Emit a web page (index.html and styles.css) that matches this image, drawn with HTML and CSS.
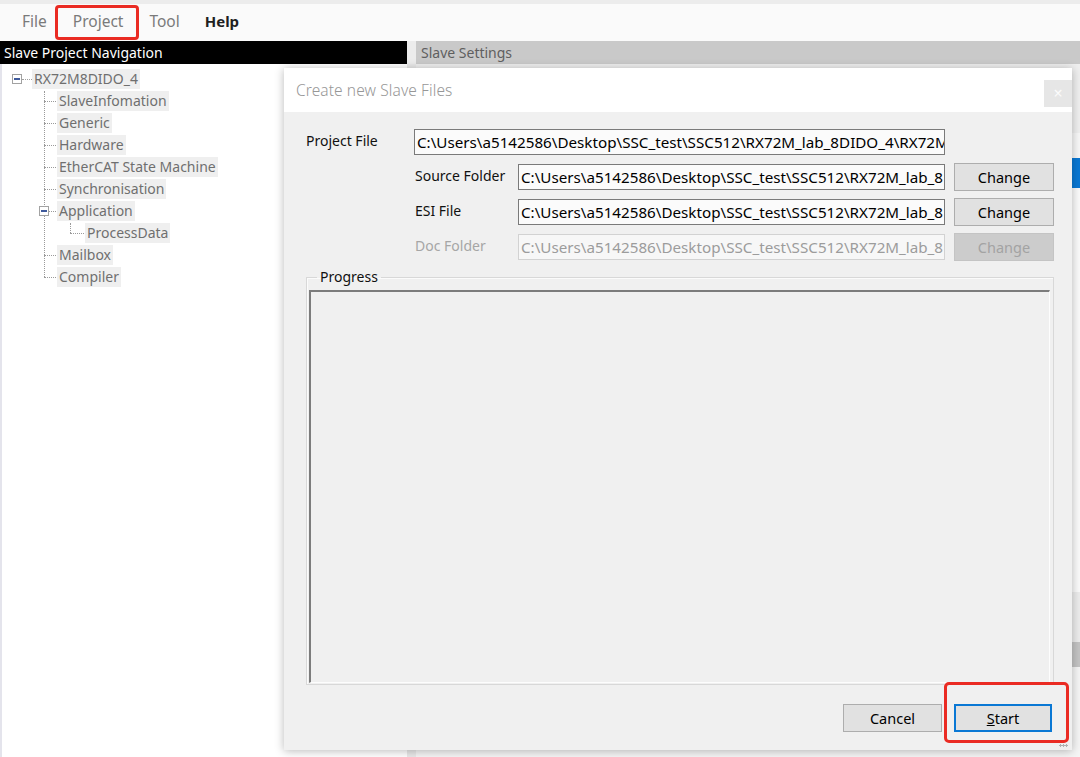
FILE: index.html
```html
<!DOCTYPE html>
<html>
<head>
<meta charset="utf-8">
<link rel="stylesheet" href="styles.css">
</head>
<body>
<div class="app">
  <div class="menubar">
    <span class="menu menu-file">File</span>
    <span class="menu menu-hl">Project</span>
    <span class="menu menu-tool">Tool</span>
    <span class="menu menu-strong">Help</span>
  </div>
  <div class="headers">
    <div class="hdr-left">Slave Project Navigation</div>
    <div class="hdr-gap"></div>
    <div class="hdr-right">Slave Settings</div>
  </div>
  <div class="main">
    <div class="nav">
      <div class="tree">
        <div class="root-row">
          <span class="toggle"></span><span class="root-dash"></span><span class="node">RX72M8DIDO_4</span>
        </div>
        <ul class="children">
          <li class="row"><span class="node">SlaveInfomation</span></li>
          <li class="row"><span class="node">Generic</span></li>
          <li class="row"><span class="node">Hardware</span></li>
          <li class="row"><span class="node">EtherCAT State Machine</span></li>
          <li class="row"><span class="node">Synchronisation</span></li>
          <li class="row has-sub"><span class="toggle toggle-sub"></span><span class="node">Application</span>
            <ul class="children sub">
              <li class="row"><span class="node">ProcessData</span></li>
            </ul>
          </li>
          <li class="row"><span class="node">Mailbox</span></li>
          <li class="row"><span class="node">Compiler</span></li>
        </ul>
      </div>
    </div>
    <div class="splitter"></div>
    <div class="settings">
      <div class="s-top"></div>
      <div class="s-white"></div>
      <div class="s-selected"></div>
      <div class="s-list"></div>
      <div class="s-light"></div>
      <div class="s-bar"></div>
      <div class="s-rest"></div>
    </div>
  </div>

  <div class="dialog">
    <div class="titlebar">
      <span class="title">Create new Slave Files</span>
      <span class="close">×</span>
    </div>
    <div class="dlg-body">
      <div class="form">
        <span class="lbl lbl-project">Project File</span>
        <div class="field field-wide"><span class="field-text">C:\Users\a5142586\Desktop\SSC_test\SSC512\RX72M_lab_8DIDO_4\RX72M</span></div>

        <span class="lbl">Source Folder</span>
        <div class="field"><span class="field-text">C:\Users\a5142586\Desktop\SSC_test\SSC512\RX72M_lab_8</span></div>
        <button class="btn btn-change">Change</button>

        <span class="lbl">ESI File</span>
        <div class="field"><span class="field-text">C:\Users\a5142586\Desktop\SSC_test\SSC512\RX72M_lab_8</span></div>
        <button class="btn btn-change">Change</button>

        <span class="lbl lbl-disabled">Doc Folder</span>
        <div class="field field-disabled"><span class="field-text">C:\Users\a5142586\Desktop\SSC_test\SSC512\RX72M_lab_8</span></div>
        <button class="btn btn-change btn-disabled">Change</button>
      </div>

      <fieldset class="group">
        <legend class="legend">Progress</legend>
        <div class="progress-box"></div>
      </fieldset>

      <div class="actions">
        <button class="btn btn-cancel">Cancel</button>
        <button class="btn btn-start"><span class="ul">S</span>tart</button>
      </div>
    </div>
    <span class="grip"></span>
    <span class="callout"></span>
  </div>
</div>
</body>
</html>
```

FILE: styles.css
```css
* { box-sizing: border-box; }

html, body {
  margin: 0;
  padding: 0;
  width: 1080px;
  height: 757px;
  overflow: hidden;
  background: #ffffff;
  font-family: "Noto Sans", "Liberation Sans", sans-serif;
}

.app {
  position: relative;
  width: 1080px;
  height: 757px;
  display: flex;
  flex-direction: column;
}

/* ---------- menu bar ---------- */
.menubar {
  height: 41px;
  border-top: 4px solid #ececec;
  background: #fafafa;
  display: flex;
  align-items: flex-start;
  padding-top: 1px;
  padding-left: 22px;
}

.menu {
  font-size: 15.5px;
  line-height: 27px;
  height: 35px;
  padding-top: 3px;
  color: #7a7a7a;
}

.menu-file { margin-right: 8px; }

.menu-hl {
  border: 3px solid #ea2b23;
  border-radius: 4px;
  padding: 0 13px 0 15px;
  margin-right: 10px;
}

.menu-tool { margin-right: 25px; }

.menu-strong {
  color: #1f1f1f;
  font-weight: bold;
  font-size: 15px;
}

/* ---------- headers ---------- */
.headers {
  display: flex;
  height: 23px;
}

.hdr-left {
  width: 407px;
  background: #000;
  color: #fff;
  font-size: 14px;
  line-height: 23px;
  padding-left: 4px;
}

.hdr-gap {
  width: 9px;
  background: #ececec;
}

.hdr-right {
  flex: 1;
  background: #c9c9c9;
  color: #5f5f5f;
  font-size: 14px;
  line-height: 23px;
  padding-left: 5px;
}

/* ---------- main area ---------- */
.main {
  flex: 1;
  display: flex;
}

.nav {
  width: 407px;
  background: #fff;
  border-left: 2px solid #e4e4ec;
  padding-top: 4px;
}

.splitter {
  width: 9px;
  background: #e9e9e9;
}

.settings {
  flex: 1;
  display: flex;
  flex-direction: column;
}

.s-top { height: 69px; background: #efefef; }
.s-white { height: 25px; background: #f7f7f7; }
.s-selected { height: 30px; background: #0a78d4; }
.s-list { height: 404px; background: #fafafa; }
.s-light { height: 50px; background: #ececec; }
.s-bar { height: 25px; background: #c4c4c4; }
.s-rest { flex: 1; background: #f5f5f5; }

/* ---------- tree ---------- */
.tree {
  font-size: 14px;
  color: #6f6f6f;
}

.root-row {
  height: 22px;
  display: flex;
  align-items: center;
  padding-left: 10px;
}

.toggle {
  position: relative;
  width: 10px;
  height: 10px;
  border: 1px solid #a2a2a2;
  background: #fff;
  flex: none;
}

.toggle::after {
  content: "";
  position: absolute;
  left: 1px;
  right: 1px;
  top: 3px;
  height: 2px;
  background: #3f5a9c;
}

.root-dash {
  width: 10px;
  border-top: 1px dotted #a0a0a0;
  flex: none;
}

.node {
  display: inline-block;
  background: #efefef;
  padding: 0 2px;
  line-height: 20px;
  height: 20px;
  white-space: nowrap;
}

.children {
  list-style: none;
  margin: 0 0 0 42px;
  padding: 0;
  position: relative;
}

.children::before {
  content: "";
  position: absolute;
  left: 0;
  top: 1px;
  bottom: 11px;
  border-left: 1px dotted #9a9a9a;
}

.row {
  position: relative;
  padding-left: 13px;
  min-height: 22px;
  line-height: 22px;
}

.row::before {
  content: "";
  position: absolute;
  left: 0;
  top: 11px;
  width: 12px;
  border-top: 1px dotted #9a9a9a;
}

.row > .node { vertical-align: top; margin-top: 1px; }

.toggle-sub {
  position: absolute;
  left: -5px;
  top: 6px;
  z-index: 1;
}

.has-sub > .sub { margin-left: 13px; }

.sub .row { padding-left: 15px; }
.sub .row::before { width: 14px; }

/* ---------- dialog ---------- */
.dialog {
  position: absolute;
  left: 284px;
  top: 68px;
  width: 788px;
  height: 682px;
  display: flex;
  flex-direction: column;
  background: #f0f0f0;
  box-shadow: 0 1px 9px rgba(0, 0, 0, 0.28);
}

.titlebar {
  height: 44px;
  background: #fff;
  display: flex;
  align-items: center;
  justify-content: space-between;
  padding-left: 12px;
}

.title {
  font-size: 15.5px;
  color: #979797;
  font-weight: 300;
  letter-spacing: 0.1px;
}

.close {
  align-self: flex-end;
  margin-bottom: 5px;
  width: 28px;
  height: 27px;
  background: #e6e6e6;
  color: #fbfbfb;
  font-size: 16px;
  line-height: 27px;
  text-align: center;
}

.dlg-body {
  flex: 1;
  display: flex;
  flex-direction: column;
  padding: 16px 18px 18px 22px;
}

.form {
  display: grid;
  grid-template-columns: 108px 104px 427px 109px;
  grid-auto-rows: 28px;
  row-gap: 7px;
  align-items: center;
}

.lbl {
  font-size: 14px;
  line-height: 20px;
  color: #111;
  white-space: nowrap;
  margin-top: -2px;
}

.lbl-project { grid-column: 1; }
.lbl:not(.lbl-project) { grid-column: 2; padding-left: 1px; }

.lbl-disabled { color: #a6a6a6; }

.field {
  grid-column: 3;
  height: 26px;
  border: 1px solid #7a7a7a;
  background: #fbfbfb;
  padding-left: 2px;
  overflow: hidden;
}

.field-text {
  display: block;
  font-size: 15.2px;
  line-height: 24px;
  color: #000;
  white-space: nowrap;
}

.field-wide { grid-column: 2 / 4; }

.field-disabled {
  border-color: #d2d2d2;
  background: #f7f7f7;
}

.field-disabled .field-text { color: #9c9c9c; }

.btn {
  font-family: inherit;
  font-size: 14.5px;
  color: #000;
  background: #e1e1e1;
  border: 1px solid #adadad;
  height: 28px;
  padding: 0;
  margin: 0;
}

.btn-change {
  grid-column: 4;
  width: 100px;
  margin-left: 9px;
}

.btn-disabled {
  background: #cccccc;
  border-color: #c4c4c4;
  color: #a3a3a3;
}

.group {
  flex: 1;
  margin: 7px 0 0 0;
  padding: 4px 3px 1px 2px;
  border: 1px solid #d8d8d8;
  box-shadow: inset 1px 1px 0 #fbfbfb;
  display: flex;
  min-width: 0;
}

.legend {
  margin-left: 8px;
  padding: 0 3px;
  font-size: 14px;
  line-height: 18px;
  color: #111;
}

.progress-box {
  flex: 1;
  background: #f0f0f0;
  border-top: 2px solid #7c7c7c;
  border-left: 2px solid #7c7c7c;
  border-right: 1px solid #fdfdfd;
  border-bottom: 1px solid #fdfdfd;
}

.actions {
  margin-top: 19px;
  margin-right: 2px;
  display: flex;
  justify-content: flex-end;
  gap: 12px;
}

.btn-cancel { width: 99px; }

.btn-start {
  width: 98px;
  border: 2px solid #0a78d4;
}

.ul { text-decoration: underline; }

.grip {
  position: absolute;
  right: 4px;
  bottom: 3px;
  width: 9px;
  height: 3px;
  background-image: radial-gradient(circle, #b0b0b0 1px, transparent 1.2px);
  background-size: 3px 3px;
}

.callout {
  position: absolute;
  left: 660px;
  top: 614px;
  width: 125px;
  height: 61px;
  border: 3px solid #ea2b23;
  border-radius: 5px;
  pointer-events: none;
}
```
